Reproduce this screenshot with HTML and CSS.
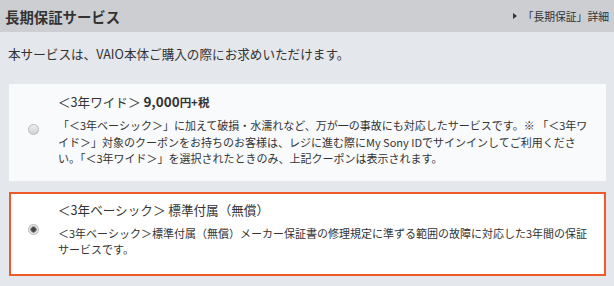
FILE: index.html
```html
<!DOCTYPE html>
<html lang="ja">
<head>
    <meta charset="UTF-8">
    <meta name="viewport" content="width=device-width, initial-scale=1.0">
    <title>長期保証サービス</title>
    <link rel="stylesheet" href="styles.css">
</head>
<body>

    <!-- 見出し -->
    <div class="head">
        <h2 class="head-title">長期保証サービス</h2>
        <a class="head-link" href="#"><span class="arrow"></span>「長期保証」詳細</a>
    </div>

    <p class="intro">本サービスは、VAIO本体ご購入の際にお求めいただけます。</p>

    <!-- 選択肢 -->
    <div class="plans">
        <label class="plan">
            <span class="radio"></span>
            <span class="plan-body">
                <span class="plan-title">＜3年ワイド＞ <b class="price">9,000<small>円+税</small></b></span>
                <span class="plan-desc">「＜3年ベーシック＞」に加えて破損・水濡れなど、万が一の事故にも対応したサービスです。※ 「＜3年ワイド＞」対象のクーポンをお持ちのお客様は、レジに進む際にMy Sony IDでサインインしてご利用ください。「＜3年ワイド＞」を選択されたときのみ、上記クーポンは表示されます。</span>
            </span>
        </label>

        <label class="plan plan-selected">
            <span class="radio radio-on"></span>
            <span class="plan-body">
                <span class="plan-title">＜3年ベーシック＞ 標準付属（無償）</span>
                <span class="plan-desc">＜3年ベーシック＞標準付属（無償）メーカー保証書の修理規定に準ずる範囲の故障に対応した3年間の保証サービスです。</span>
            </span>
        </label>
    </div>

</body>
</html>
```

FILE: styles.css
```css
body { margin: 0; background: #e4e7eb; color: #333; font-family: "Noto Sans CJK JP", "Noto Sans", sans-serif; }
.head { display: flex; align-items: center; justify-content: space-between; height: 32px; background: #cdced2; padding: 0 5px 0 5px; }
.head-title { margin: 0; font-size: 14.4px; font-weight: bold; color: #333; }
.head-link { display: flex; align-items: center; font-size: 10.8px; color: #333; text-decoration: none; }
.arrow { width: 0; height: 0; border-left: 4px solid #333; border-top: 3px solid transparent; border-bottom: 3px solid transparent; margin-right: 6px; }
.intro { margin: 0; padding: 13px 8px 0; height: 39px; font-size: 12.6px; line-height: 18px; }
.plans { display: flex; flex-direction: column; gap: 11px; padding: 0 8px 0 9px; }
.plan { display: flex; align-items: center; background: #f9fafc; padding: 8px 18px 14px 0; cursor: pointer; }
.plan-selected { background: #fff; border: 2px solid #f05a2a; padding: 7px 16px 16px 0; }
.radio { flex: none; width: 9px; height: 9px; border: 1px solid #b8b8b8; border-radius: 50%; background: linear-gradient(#f0f0f0, #d2d2d2); margin: 0 19px 0 19px; }
.plan-selected .radio { margin-left: 17px; }
.radio-on { background: radial-gradient(circle, #444 0 2px, #9a9a9a 2.6px 3px, #e6e6e6 3.6px); }
.plan-body { display: flex; flex-direction: column; }
.plan-title { font-size: 12.6px; line-height: 18px; margin-bottom: 6px; }
.price { font-size: 13.5px; }
.price small { font-size: 11.5px; }
.plan-desc { font-size: 11px; line-height: 16.5px; }
```
